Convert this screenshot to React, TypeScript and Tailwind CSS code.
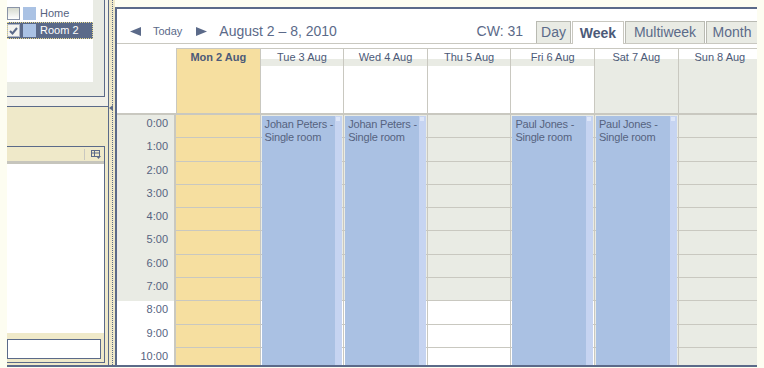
import React from "react";

type Day = { label: string; today?: boolean; weekend?: boolean; who?: string };

const days: Day[] = [
  { label: "Mon 2 Aug", today: true },
  { label: "Tue 3 Aug", who: "Johan Peters" },
  { label: "Wed 4 Aug", who: "Johan Peters" },
  { label: "Thu 5 Aug" },
  { label: "Fri 6 Aug", who: "Paul Jones" },
  { label: "Sat 7 Aug", weekend: true, who: "Paul Jones" },
  { label: "Sun 8 Aug", weekend: true },
];

const hours = Array.from({ length: 11 }, (_, i) => i);

const cols = "grid grid-cols-[repeat(7,83.6px)]";

function cellBg(d: Day, h: number) {
  if (d.today) return "bg-[#f6dfa0]";
  if (d.weekend || h < 8) return "bg-[#e9ebe4]";
  return "bg-white";
}

function allDayBg(d: Day) {
  if (d.today) return "bg-[#f6dfa0]";
  if (d.weekend) return "bg-[#e9ebe4]";
  return "bg-white";
}

function Arrow({ dir, className = "" }: { dir: "left" | "right"; className?: string }) {
  return (
    <svg width="11" height="9" viewBox="0 0 11 9" className={className}>
      <polygon points={dir === "left" ? "11,0 11,9 0,4.5" : "0,0 11,4.5 0,9"} fill="#5b6a89" />
    </svg>
  );
}

function CalendarList() {
  return (
    <div className="h-[107px] shrink-0 border-b border-[#5b6a89] bg-[#f1f0e8] pr-[3px] pb-[9px]">
      <div className="h-full border-r border-b border-[#5b6a89] bg-[#e9ebe4] pr-[11px] pb-[14px]">
        <div className="h-full bg-white pt-[5px] text-[11px]">
          <div className="flex items-center h-[17px] text-[#56637f]">
            <span className="w-[13px] h-[13px] border border-[#8a94a8] bg-gradient-to-b from-[#d6dacf] to-white" />
            <span className="ml-[3px] w-[13px] h-[13px] bg-[#aac2e4]" />
            <span className="ml-[4px]">Home</span>
          </div>
          <div className="flex items-center h-[17px] bg-[#5b6a89] outline outline-1 outline-dotted outline-[#e6d88e] -outline-offset-1 text-white">
            <span className="w-[13px] h-[13px] border border-[#aeb6c6] bg-[#f4f4f0] flex items-center justify-center">
              <svg width="9" height="8" viewBox="0 0 9 8">
                <path d="M1 4 L3.5 6.5 L8 1" stroke="#5b6a89" strokeWidth="2" fill="none" />
              </svg>
            </span>
            <span className="ml-[3px] w-[13px] h-[13px] bg-[#aac2e4]" />
            <span className="ml-[4px]">Room 2</span>
          </div>
        </div>
      </div>
    </div>
  );
}

function SidePanel() {
  return (
    <div className="flex-1 flex flex-col mr-[3px] mb-[2px] border-t border-r border-b border-[#5b6a89]">
      <div className="h-[14px] shrink-0 flex items-center justify-end pr-[3px]">
        <span className="w-px h-[11px] bg-[#c9c8c0]" />
        <svg width="10" height="9" viewBox="0 0 10 9" className="ml-[6px]">
          <rect x="0.5" y="0.5" width="8" height="6" fill="none" stroke="#5b6a89" />
          <path d="M0.5 3 H8.5 M3.5 0.5 V6.5" stroke="#5b6a89" />
          <polygon points="5,6 10,6 7.5,9" fill="#5b6a89" />
        </svg>
      </div>
      <div className="h-[3px] shrink-0 bg-[#c6c5bc]" />
      <div className="flex-1 bg-white" />
      <div className="h-[29px] shrink-0 pt-[6px] pr-[3px]">
        <div className="h-[20px] border border-[#5b6a89] bg-white" />
      </div>
    </div>
  );
}

function Toolbar() {
  const tab = "h-[22px] flex items-center justify-center text-[14px] border border-b-0";
  return (
    <div className="flex items-end h-[35px] shrink-0 border-b border-[#c9c8c0] pl-[13px] text-[#5b6a89]">
      <div className="flex items-center h-[22px] mb-[1px]">
        <Arrow dir="left" />
        <span className="ml-[12px] text-[11px]">Today</span>
        <Arrow dir="right" className="ml-[14px]" />
        <span className="ml-[12px] text-[14px]">August 2 – 8, 2010</span>
      </div>
      <div className="flex-1" />
      <div className="h-[22px] mb-[1px] mr-[13px] flex items-center text-[14px]">CW: 31</div>
      <div className={`${tab} w-[35px] bg-[#e9ebe4] border-[#b9bab2]`}>Day</div>
      <div className={`${tab} w-[52px] ml-[1px] -mb-px h-[23px] bg-white border-[#c9c8c0] font-bold text-[#4c5a78]`}>Week</div>
      <div className={`${tab} w-[80px] ml-[1px] bg-[#e9ebe4] border-[#b9bab2]`}>Multiweek</div>
      <div className={`${tab} w-[51px] ml-[1px] bg-[#e9ebe4] border-[#b9bab2] border-r-0`}>Month</div>
    </div>
  );
}

function Calendar() {
  return (
    <div className="flex-1 min-w-0 mt-[7px] border-t-2 border-l-2 border-[#5b6a89] bg-white flex flex-col overflow-hidden">
      <Toolbar />
      <div className="h-[4px] shrink-0" />

      <div className="flex h-[18px] shrink-0">
        <div className="w-[59px] shrink-0" />
        <div className={cols}>
          {days.map((d) => (
            <div
              key={d.label}
              className={`border-t border-l border-[#c9c8c0] text-[11px] leading-[17px] text-center text-[#4c5a78] ${
                d.today
                  ? "bg-[#f6dfa0] font-bold"
                  : "bg-[linear-gradient(to_bottom,#ffffff_58%,#e9ebe4_58%)]"
              }`}
            >
              {d.label}
            </div>
          ))}
        </div>
      </div>

      <div className="flex h-[47px] shrink-0">
        <div className="w-[59px] shrink-0" />
        <div className={cols}>
          {days.map((d) => (
            <div key={d.label} className={`border-l border-[#c9c8c0] ${allDayBg(d)}`} />
          ))}
        </div>
      </div>

      <div className="h-[2px] shrink-0 bg-[#c9c8c0]" />

      <div className="flex flex-1 min-h-0">
        <div className="w-[59px] shrink-0 border-r-2 border-[#c9c8c0]">
          {hours.map((h) => (
            <div
              key={h}
              className={`h-[23.3px] pt-[2px] pr-[6px] text-right text-[11px] leading-[13px] text-[#56637f] ${
                h < 8 ? "bg-[#e9ebe4]" : "bg-white"
              }`}
            >
              {h}:00
            </div>
          ))}
        </div>
        <div className={cols}>
          {days.map((d) => (
            <div key={d.label} className={`relative ${d.today ? "" : "border-l border-[#c9c8c0]"}`}>
              {hours.map((h) => (
                <div key={h} className={`h-[23.3px] border-b border-[#c9c8c0] ${cellBg(d, h)}`} />
              ))}
              {d.who && (
                <div className="absolute left-[1px] right-[1px] top-[1px] bottom-0 bg-[#aac1e3] pl-[3px] pt-[2px] text-[11px] leading-[13px] tracking-[-0.2px] text-[#56637f]">
                  {d.who} -<br />
                  Single room
                  <div className="absolute right-0 top-0 bottom-0 w-[7px] bg-[#c6d4f1]">
                    <div className="ml-[1px] mt-[1px] w-[4px] h-[4px] bg-[#dde6f8]" />
                  </div>
                </div>
              )}
            </div>
          ))}
        </div>
      </div>
    </div>
  );
}

export default function App() {
  return (
    <div className="w-[764px] h-[368px] overflow-hidden bg-[#fdfdf1] pl-[7px] pr-[7px] pb-[1px] font-['Liberation_Sans',Arial,sans-serif]">
      <div className="flex h-full border-b-2 border-[#5b6a89]">
        <div className="w-[102px] shrink-0 flex flex-col border-r border-[#5b6a89] bg-[#efe9c9]">
          <CalendarList />
          <div className="h-[39px] shrink-0" />
          <SidePanel />
        </div>

        <div className="w-[6px] shrink-0 bg-[#efe9c9] relative">
          <div className="absolute left-[3px] top-0 bottom-0 border-l border-dotted border-[#5b6a89]" />
          <svg width="4" height="6" viewBox="0 0 4 6" className="absolute left-0 top-[105px]">
            <polygon points="4,0 4,6 0,3" fill="#5b6a89" />
          </svg>
        </div>

        <Calendar />
      </div>
    </div>
  );
}
